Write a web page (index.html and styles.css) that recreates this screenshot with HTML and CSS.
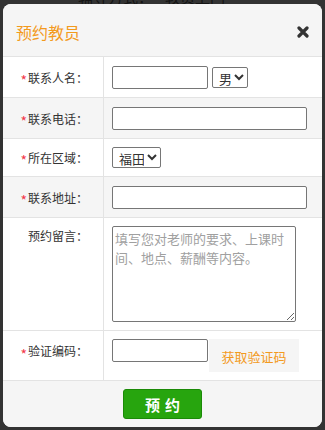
FILE: index.html
```html
<!DOCTYPE html>
<html lang="zh-CN">

<head>
  <meta charset="UTF-8">
  <meta name="viewport" content="width=device-width, initial-scale=1.0">
  <title>预约教员</title>
  <link rel="stylesheet" href="styles.css">
</head>

<body>
  <!-- page content peeking out behind the overlay -->
  <div class="behind">
    <div class="behind-line"><span>辅导方式：</span><span>教员上门</span></div>
  </div>

  <div class="dialog">
    <div class="dialog-head">
      <h2 class="dialog-title">预约教员</h2>
      <button type="button" class="dialog-close" aria-label="关闭">
        <svg width="12" height="12" viewBox="0 0 12 12">
          <path d="M2 2 L10 10 M10 2 L2 10" stroke="#333" stroke-width="3.2" stroke-linecap="round" />
        </svg>
      </button>
    </div>

    <form class="book-form" id="bookForm">
      <div class="form-row">
        <label class="cell-label" for="contactName"><i class="req">*</i>联系人名：</label>
        <div class="cell-field">
          <input type="text" id="contactName" class="txt txt-short">
          <select class="sel sel-sex">
            <option>男</option>
            <option>女</option>
          </select>
        </div>
      </div>

      <div class="form-row row-alt">
        <label class="cell-label" for="contactPhone"><i class="req">*</i>联系电话：</label>
        <div class="cell-field">
          <input type="text" id="contactPhone" class="txt txt-long">
        </div>
      </div>

      <div class="form-row row-slim">
        <label class="cell-label"><i class="req">*</i>所在区域：</label>
        <div class="cell-field">
          <select class="sel sel-area">
            <option>福田</option>
            <option>罗湖</option>
            <option>南山</option>
          </select>
        </div>
      </div>

      <div class="form-row row-alt">
        <label class="cell-label" for="contactAddr"><i class="req">*</i>联系地址：</label>
        <div class="cell-field">
          <input type="text" id="contactAddr" class="txt txt-long">
        </div>
      </div>

      <div class="form-row row-top">
        <label class="cell-label" for="message">预约留言：</label>
        <div class="cell-field">
          <textarea id="message" class="memo" placeholder="填写您对老师的要求、上课时间、地点、薪酬等内容。"></textarea>
        </div>
      </div>

      <div class="form-row row-code">
        <label class="cell-label" for="code"><i class="req">*</i>验证编码：</label>
        <div class="cell-field">
          <input type="text" id="code" class="txt txt-short">
          <button type="button" class="get-code">获取验证码</button>
        </div>
      </div>
    </form>

    <div class="dialog-foot">
      <button type="button" class="submit-btn">预约</button>
    </div>
  </div>
</body>

</html>
```

FILE: styles.css
```css
body {
  margin: 0;
  background-color: #333;
  font-family: "Noto Sans CJK SC", "Liberation Sans", sans-serif;
  color: #333;
}

/* text of the page under the overlay, only its bottom edge shows */
.behind {
  height: 4px;
  overflow: hidden;
}

.behind-line {
  margin-top: -10px;
  padding-left: 78px;
  font-size: 15px;
  line-height: 14px;
  color: #141414;
  display: flex;
  gap: 12px;
}

.dialog {
  margin: 0 3px;
  background-color: #fff;
  border-radius: 8px;
  overflow: hidden;
}

.dialog-head {
  height: 52px;
  background-color: #f5f5f5;
  border-bottom: 1px solid #e3e3e3;
  display: flex;
  align-items: center;
  justify-content: space-between;
  padding: 0 13px 0 13px;
}

.dialog-title {
  margin: 0;
  font-size: 16px;
  font-weight: normal;
  color: #f39a1d;
  line-height: 20px;
  padding-top: 4px;
}

.dialog-close {
  background: none;
  border: none;
  padding: 0;
  width: 12px;
  height: 12px;
  display: flex;
  cursor: pointer;
  margin-top: 4px;
}

.form-row {
  display: grid;
  grid-template-columns: 101px 1fr;
  border-bottom: 1px solid #e3e3e3;
  height: 41px;
  box-sizing: border-box;
  background-color: #fff;
}

.row-alt {
  background-color: #f5f5f5;
}

.row-slim {
  height: 38px;
}

.row-top {
  height: 113px;
}

.row-code {
  height: 50px;
}

.cell-label {
  display: flex;
  align-items: center;
  justify-content: flex-end;
  padding-right: 15px;
  border-right: 1px solid #e3e3e3;
  font-size: 12px;
  color: #333;
}

.req {
  font-style: normal;
  color: #f2384a;
  font-size: 14px;
  line-height: 12px;
  margin-right: 1px;
  padding-top: 5px;
}

.cell-field {
  display: flex;
  align-items: center;
  gap: 4px;
  padding-left: 8px;
}

.row-top .cell-label,
.row-code .cell-label {
  align-items: flex-start;
  padding-top: 9px;
}

.row-top .cell-label {
  line-height: 18px;
}

.row-code .cell-label {
  line-height: 22px;
}

.row-code .cell-label .req {
  padding-top: 8px;
}

.row-top .cell-field,
.row-code .cell-field {
  align-items: flex-start;
  padding-top: 8px;
}

.txt {
  box-sizing: border-box;
  height: 23px;
  border: 1px solid #767676;
  border-radius: 2px;
  padding: 0 3px;
  font-size: 13px;
  background: #fff;
}

.txt-short {
  width: 96px;
}

.txt-long {
  width: 195px;
}

.sel {
  box-sizing: border-box;
  height: 21px;
  font-size: 13px;
  font-family: "Noto Sans CJK SC", sans-serif;
  color: #333;
  border: 1px solid #767676;
  border-radius: 2px;
  background: #fff;
  padding: 0 0 0 2px;
}

.sel-sex {
  width: 36px;
}

.sel-area {
  width: 49px;
}

.memo {
  box-sizing: border-box;
  width: 184px;
  height: 96px;
  border: 1px solid #767676;
  border-radius: 2px;
  padding: 2px 2px;
  font-size: 13px;
  line-height: 19px;
  font-family: "Noto Sans CJK SC", sans-serif;
  resize: vertical;
  margin: 0;
}

.memo::placeholder {
  color: #a0a0a0;
}

.get-code {
  width: 90px;
  height: 33px;
  border: none;
  background-color: #f5f5f5;
  color: #f39a1d;
  font-size: 13px;
  font-family: "Noto Sans CJK SC", sans-serif;
  padding: 2px 0 0;
  margin-left: -3px;
  cursor: pointer;
}

.dialog-foot {
  height: 46px;
  background-color: #f5f5f5;
  display: flex;
  justify-content: center;
  align-items: flex-start;
  padding-top: 8px;
  box-sizing: border-box;
}

.submit-btn {
  width: 79px;
  height: 30px;
  background-color: #27a50e;
  border: 1px solid #1b8a07;
  border-radius: 3px;
  color: #fff;
  font-size: 15px;
  font-weight: bold;
  letter-spacing: 5px;
  text-indent: 5px;
  font-family: "Noto Sans CJK SC", sans-serif;
  padding: 0;
  cursor: pointer;
}
```
